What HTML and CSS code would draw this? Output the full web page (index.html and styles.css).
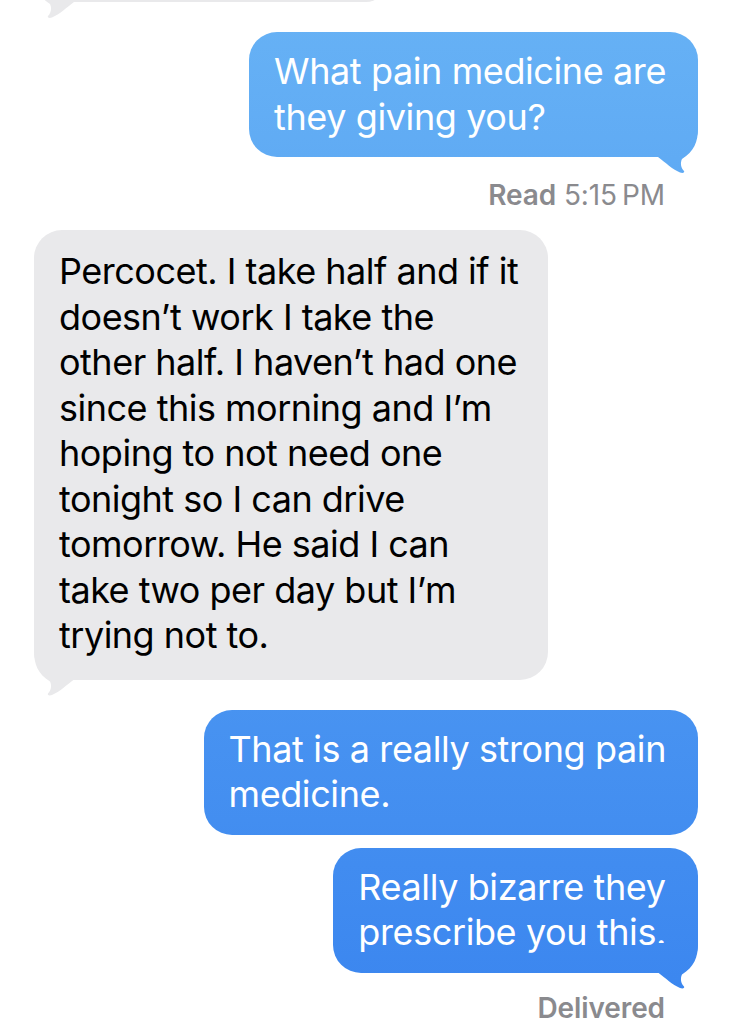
FILE: index.html
```html
<!DOCTYPE html>
<html lang="en">
<head>
<meta charset="utf-8">
<title>Messages</title>
<link rel="stylesheet" href="styles.css">
</head>
<body>
<main class="thread">
  <div class="row row-in">
    <div class="bubble bubble-in bubble-cut tail"></div>
  </div>
  <div class="row row-out gap-first">
    <div class="bubble bubble-out tail">What pain medicine are<br>they giving you?</div>
  </div>
  <div class="receipt receipt-read"><b>Read</b> 5:15&#8201;PM</div>
  <div class="row row-in gap-receipt">
    <div class="bubble bubble-in tail">Percocet. I take half and if it<br>doesn’t work I take the<br>other half. I haven’t had one<br>since this morning and I’m<br>hoping to not need one<br>tonight so I can drive<br>tomorrow. He said I can<br>take two per day but I’m<br>trying not to.</div>
  </div>
  <div class="row row-out gap-turn">
    <div class="bubble bubble-out">That is a really strong pain<br>medicine.</div>
  </div>
  <div class="row row-out gap-group">
    <div class="bubble bubble-out tail">Really bizarre they<br>prescribe you this.</div>
  </div>
  <div class="receipt receipt-delivered">Delivered</div>
</main>
</body>
</html>
```

FILE: styles.css
```css
html, body {
  margin: 0;
  padding: 0;
  background: #ffffff;
}

body {
  width: 734px;
  height: 1024px;
  overflow: hidden;
  font-family: Inter, "Noto Sans", "Liberation Sans", sans-serif;
  -webkit-font-smoothing: antialiased;
}

.thread {
  display: flex;
  flex-direction: column;
  padding: 0 36px 0 34px;
}

.row {
  display: flex;
}

.row-out {
  justify-content: flex-end;
}

.row-in {
  justify-content: flex-start;
}

.gap-first { margin-top: 30px; }
.gap-receipt { margin-top: 18px; }
.gap-turn { margin-top: 30px; }
.gap-group { margin-top: 13px; }

.bubble {
  position: relative;
  border-radius: 28px;
  font-size: 36px;
  line-height: 45.5px;
  letter-spacing: -0.4px;
  white-space: nowrap;
  padding: 17px 32px 17px 25px;
}

.bubble-out {
  color: #ffffff;
  background: linear-gradient(180deg, #67b2f5 0px, #3a85ef 1024px) fixed;
}

.bubble-in {
  color: #000000;
  background: #e9e9eb;
  letter-spacing: -0.5px;
  padding: 19px 30px 21px 25px;
}

.bubble-cut {
  width: 352px;
  height: 40px;
  padding: 0;
  margin-top: -38px;
  box-sizing: border-box;
}

.bubble-out.tail::after {
  content: "";
  position: absolute;
  right: 0;
  bottom: -16px;
  width: 40px;
  height: 46px;
  background: inherit;
  clip-path: path("M40 0 C40 16 36 24 24 32 C22 36 23 41 26 44 C27 45.5 25 46.5 22 45.5 C14 42 8 36 0 30 L0 0 Z");
}

.bubble-in.tail::after {
  content: "";
  position: absolute;
  left: 0;
  bottom: -16px;
  width: 40px;
  height: 46px;
  background: #e9e9eb;
  clip-path: path("M0 0 C0 16 4 24 16 32 C18 36 17 41 14 44 C13 45.5 15 46.5 18 45.5 C26 42 32 36 40 30 L40 0 Z");
}

.receipt {
  text-align: right;
  padding-right: 33px;
  font-size: 28px;
  line-height: 34px;
  color: #8a8a8e;
  letter-spacing: -0.1px;
}

.receipt b {
  font-weight: 600;
}

.receipt-read {
  margin-top: 21px;
}

.receipt-delivered {
  margin-top: 18px;
  font-weight: 600;
}
```
